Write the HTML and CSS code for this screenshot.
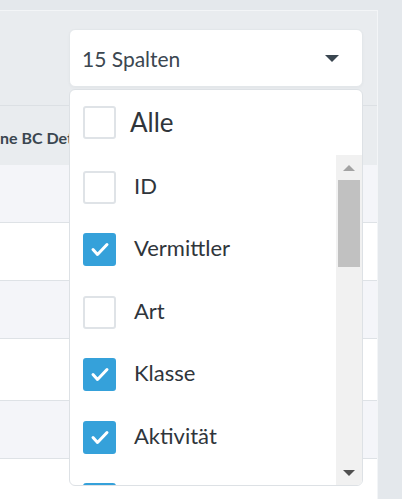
FILE: index.html
```html
<!DOCTYPE html>
<html lang="de">
<head>
<meta charset="utf-8">
<title>Spalten</title>
<link rel="stylesheet" href="styles.css">
</head>
<body>
<div class="page">
  <div class="card">
    <div class="toolbar">
      <div class="select">
        <button class="select-btn" type="button">
          <span class="select-label">15 Spalten</span>
          <span class="caret"></span>
        </button>
        <div class="menu">
          <div class="menu-all">
            <span class="cb"></span>
            <span class="all-label">Alle</span>
          </div>
          <div class="menu-scroll">
            <div class="menu-list">
              <div class="item"><span class="cb"></span><span class="item-label">ID</span></div>
              <div class="item"><span class="cb on"><svg viewBox="0 0 33 33"><path d="M10 16.5 L14.5 21.5 L24 11.5"/></svg></span><span class="item-label">Vermittler</span></div>
              <div class="item"><span class="cb"></span><span class="item-label">Art</span></div>
              <div class="item"><span class="cb on"><svg viewBox="0 0 33 33"><path d="M10 16.5 L14.5 21.5 L24 11.5"/></svg></span><span class="item-label">Klasse</span></div>
              <div class="item"><span class="cb on"><svg viewBox="0 0 33 33"><path d="M10 16.5 L14.5 21.5 L24 11.5"/></svg></span><span class="item-label">Aktivität</span></div>
              <div class="item"><span class="cb on"><svg viewBox="0 0 33 33"><path d="M10 16.5 L14.5 21.5 L24 11.5"/></svg></span></div>
            </div>
            <div class="scrollbar">
              <div class="sb-btn"><span class="arrow-up"></span></div>
              <div class="sb-thumb"></div>
              <div class="sb-space"></div>
              <div class="sb-btn"><span class="arrow-down"></span></div>
            </div>
          </div>
        </div>
      </div>
    </div>
    <div class="table">
      <div class="thead"><span class="th">ne BC Details</span></div>
      <div class="row stripe r1"></div>
      <div class="row r2"></div>
      <div class="row stripe r3"></div>
      <div class="row r4"></div>
      <div class="row stripe r5"></div>
      <div class="row r6"></div>
    </div>
  </div>
</div>
</body>
</html>
```
FILE: styles.css
```css
html, body {
  margin: 0;
  padding: 0;
}
body {
  background: #e4e8ec;
  font-family: Lato, "Open Sans", sans-serif;
  color: #343a40;
  overflow: hidden;
  height: 499px;
}
.page {
  padding-top: 10px;
  width: 378px;
}
.card {
  width: 377px;
  background: #e9ecef;
  border-top: 1px solid #f3f5f7;
  border-right: 1px solid #f3f5f7;
}
.toolbar {
  display: flex;
  justify-content: flex-end;
  align-items: flex-start;
  padding: 18px 14px 0 0;
  box-sizing: border-box;
  border-bottom: 1px solid #dce0e4;
  height: 95px;
}
.select {
  position: relative;
  width: 294px;
}
.select-btn {
  width: 294px;
  height: 58px;
  box-sizing: border-box;
  display: flex;
  align-items: center;
  justify-content: space-between;
  padding: 0 23px 0 12px;
  background: #fff;
  border: 1px solid #e3e7ea;
  border-radius: 6px;
  font-family: inherit;
  font-size: 21px;
  color: #3b4751;
  box-shadow: 0 1px 3px rgba(0,0,0,0.03);
}
.caret {
  width: 0;
  height: 0;
  border-left: 7px solid transparent;
  border-right: 7px solid transparent;
  border-top: 7px solid #3a4650;
}
.menu {
  position: absolute;
  top: 60px;
  left: 0;
  width: 294px;
  height: 397px;
  box-sizing: border-box;
  background: #fff;
  border: 1px solid #dde1e5;
  border-radius: 6px;
  overflow: hidden;
  display: flex;
  flex-direction: column;
  z-index: 5;
}
.menu-all {
  height: 65px;
  flex: none;
  display: flex;
  align-items: flex-start;
  padding: 16px 0 0 13px;
  box-sizing: border-box;
}
.all-label {
  font-size: 26px;
  line-height: 33px;
  margin-left: 14px;
  color: #2f353b;
}
.menu-scroll {
  flex: 1;
  display: flex;
  min-height: 0;
}
.menu-list {
  flex: 1;
  overflow: hidden;
  padding: 16px 0 0 13px;
}
.item {
  display: flex;
  align-items: center;
  height: 33px;
  margin-bottom: 29.4px;
}
.item-label {
  font-size: 22px;
  margin-left: 18px;
  margin-bottom: 4px;
  color: #2f353b;
}
.cb {
  flex: none;
  width: 33px;
  height: 33px;
  box-sizing: border-box;
  border: 2px solid #dfe3e7;
  border-radius: 3px;
  background: #fff;
  display: block;
}
.cb.on {
  background: #35a1da;
  border-color: #35a1da;
}
.cb svg {
  display: block;
  width: 33px;
  height: 33px;
  margin: -2px;
}
.cb svg path {
  fill: none;
  stroke: #fff;
  stroke-width: 3;
  stroke-linecap: round;
  stroke-linejoin: round;
}
.scrollbar {
  width: 26px;
  flex: none;
  background: #f1f1f1;
  display: flex;
  flex-direction: column;
}
.sb-btn {
  height: 25px;
  display: flex;
  align-items: center;
  justify-content: center;
}
.sb-thumb {
  height: 87px;
  margin: 0 2px;
  background: #c1c1c1;
}
.sb-space {
  flex: 1;
}
.arrow-up {
  width: 0;
  height: 0;
  border-left: 6px solid transparent;
  border-right: 6px solid transparent;
  border-bottom: 6px solid #a3a3a3;
}
.arrow-down {
  width: 0;
  height: 0;
  border-left: 6px solid transparent;
  border-right: 6px solid transparent;
  border-top: 6px solid #505050;
}
.table {
  background: #fff;
}
.thead {
  height: 59px;
  background: #e9ecef;
  display: flex;
  align-items: center;
  overflow: hidden;
}
.th {
  font-weight: bold;
  font-size: 16px;
  color: #3a4650;
  white-space: nowrap;
  margin-top: 3px;
}
.row {
  height: 57px;
  border-bottom: 1px solid #dee2e6;
  background: #fff;
}
.row.stripe {
  background: #f4f5f9;
}
.row.r4 {
  height: 61px;
}
.row.r6 {
  height: 60px;
  border-bottom: none;
}
```
